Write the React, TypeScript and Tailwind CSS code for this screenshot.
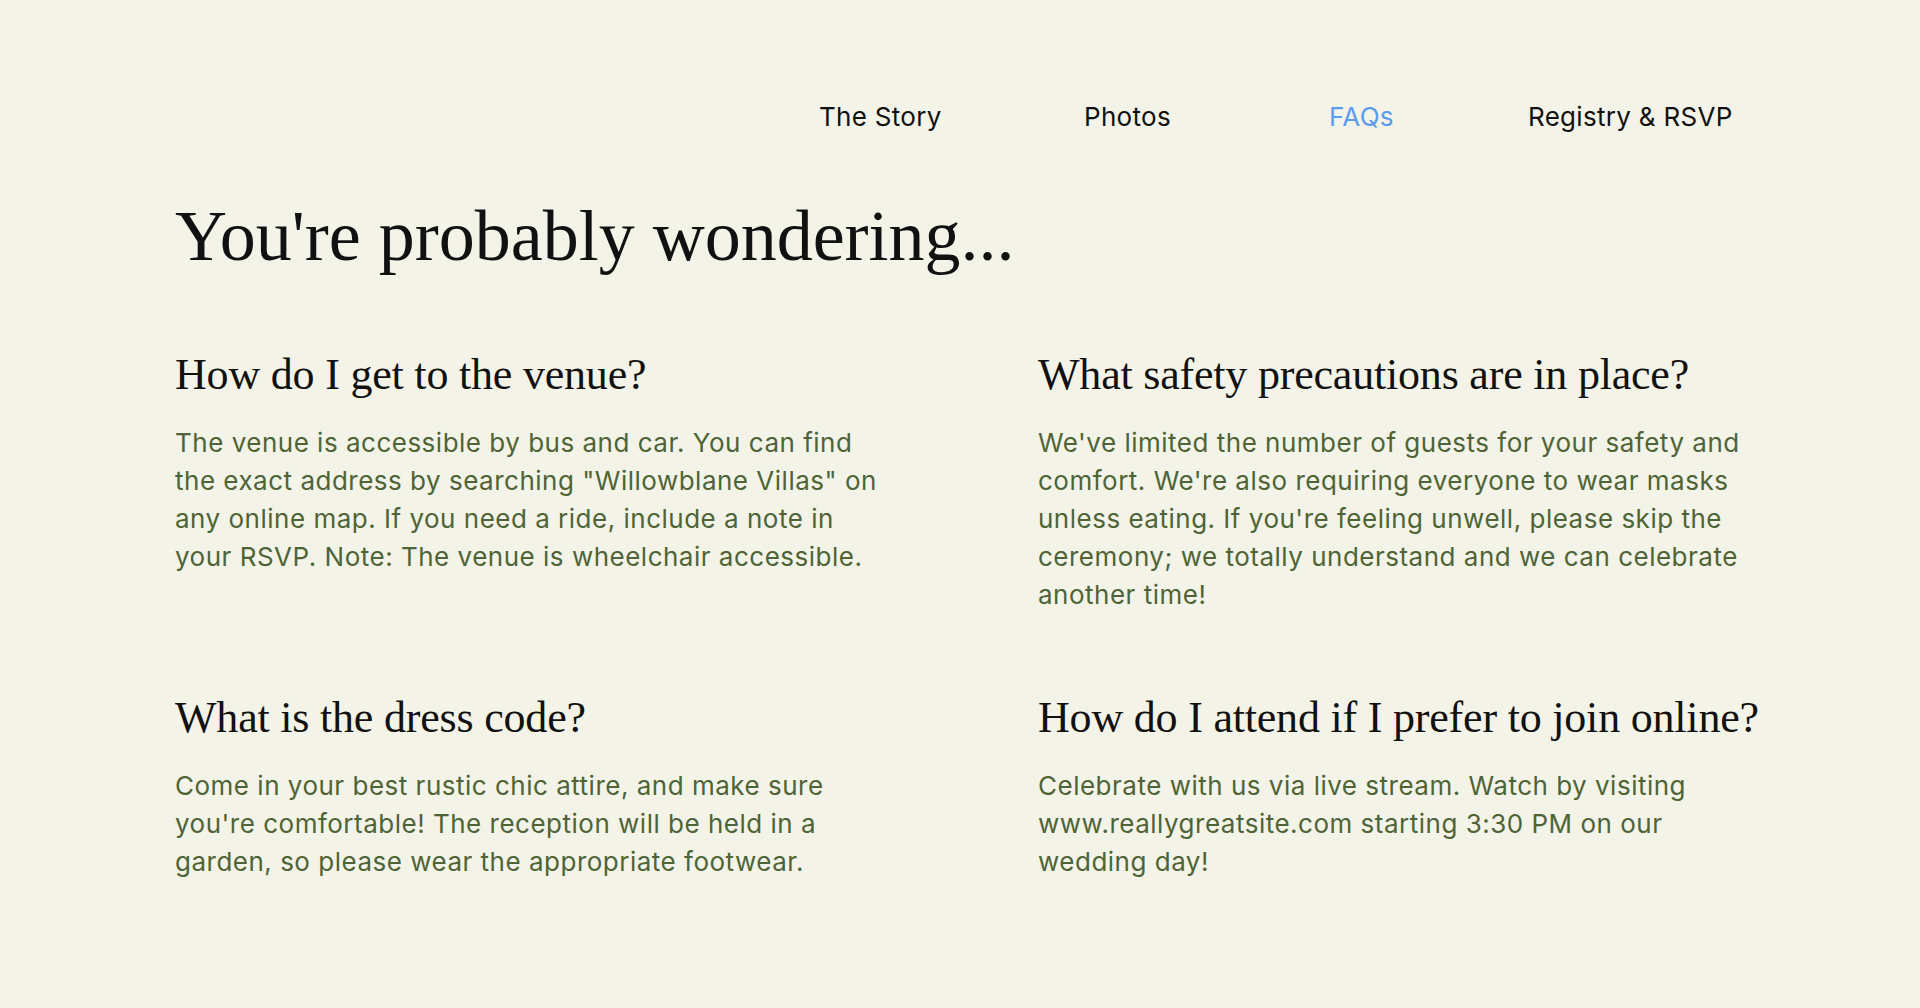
import React from "react";

const faqs = [
  {
    q: "How do I get to the venue?",
    a: [
      "The venue is accessible by bus and car. You can find",
      'the exact address by searching "Willowblane Villas" on',
      "any online map. If you need a ride, include a note in",
      "your RSVP. Note: The venue is wheelchair accessible.",
    ],
  },
  {
    q: "What safety precautions are in place?",
    a: [
      "We've limited the number of guests for your safety and",
      "comfort. We're also requiring everyone to wear masks",
      "unless eating. If you're feeling unwell, please skip the",
      "ceremony; we totally understand and we can celebrate",
      "another time!",
    ],
  },
  {
    q: "What is the dress code?",
    a: [
      "Come in your best rustic chic attire, and make sure",
      "you're comfortable! The reception will be held in a",
      "garden, so please wear the appropriate footwear.",
    ],
  },
  {
    q: "How do I attend if I prefer to join online?",
    a: [
      "Celebrate with us via live stream. Watch by visiting",
      "www.reallygreatsite.com starting 3:30 PM on our",
      "wedding day!",
    ],
  },
];

export default function App() {
  return (
    <div className="min-h-[1008px] w-full bg-[#f3f3e8] font-['Inter',sans-serif]">
      <nav className="flex pt-[101px] pl-[819px] text-[26px] leading-8 tracking-[0.3px] text-[#111111]">
        <a className="w-[265px]">The Story</a>
        <a className="w-[245px]">Photos</a>
        <a className="w-[199px] text-[#5b9cf0]">FAQs</a>
        <a>Registry &amp; RSVP</a>
      </nav>
      <main className="px-[175px]">
        <h1 className="mt-[67px] font-['Liberation_Serif',serif] text-[72px] leading-none text-[#111111]">
          You're probably wondering...
        </h1>
        <div className="mt-[81px] grid grid-cols-[760px_760px] gap-x-[103px] gap-y-[82px]">
          {faqs.map((f) => (
            <section key={f.q}>
              <h2 className="whitespace-nowrap font-['Liberation_Serif',serif] text-[44px] leading-none tracking-[-0.2px] text-[#111111]">
                {f.q}
              </h2>
              <p className="mt-[27px] text-[26px] leading-[38px] tracking-[0.5px] text-[#4f6436]">
                {f.a.map((line, i) => (
                  <span key={i} className="block whitespace-nowrap">
                    {line}
                  </span>
                ))}
              </p>
            </section>
          ))}
        </div>
      </main>
    </div>
  );
}
